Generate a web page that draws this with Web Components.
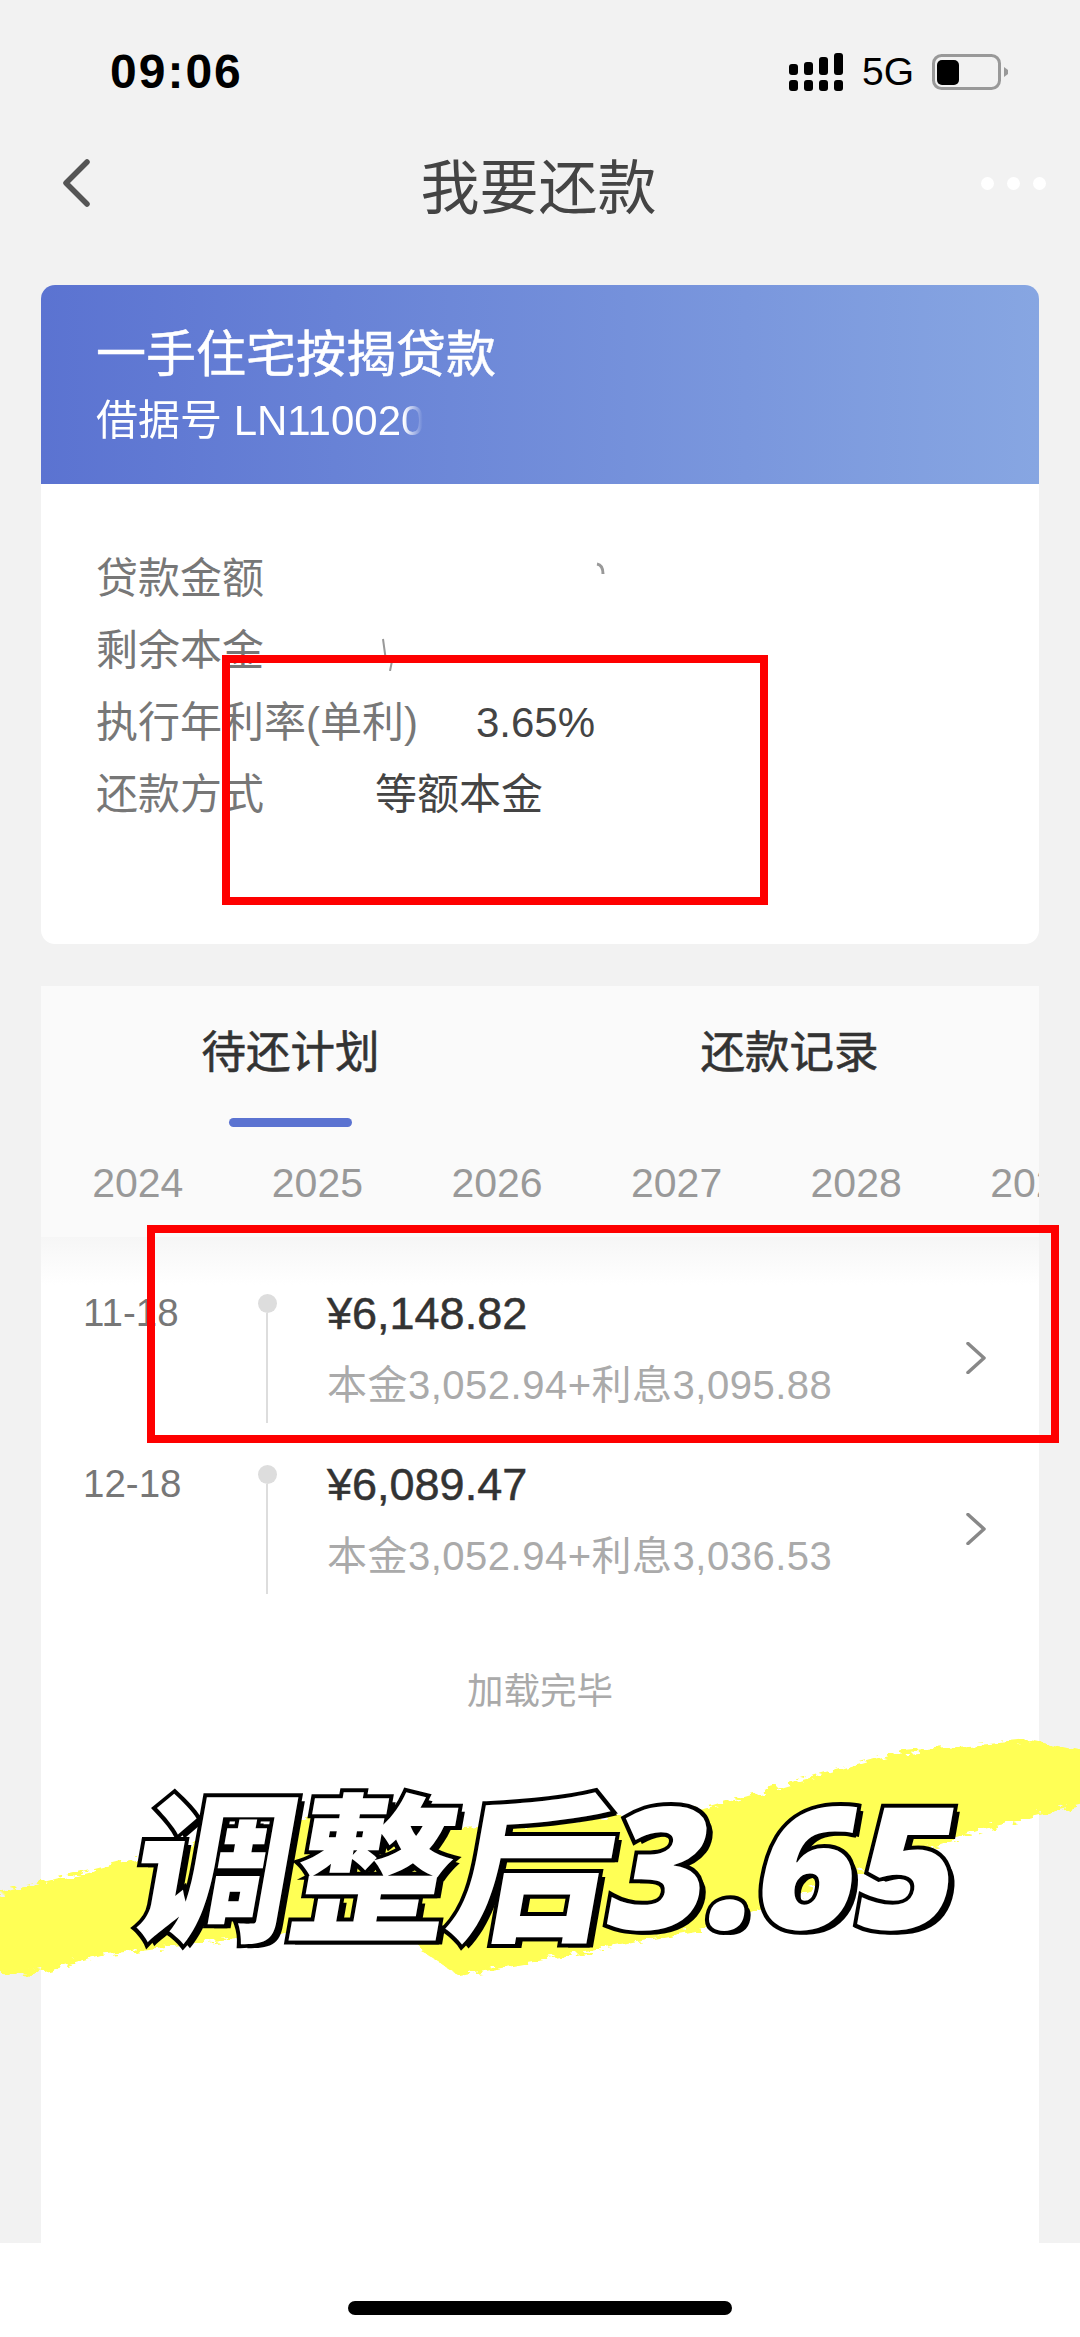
<!doctype html>
<html lang="zh-CN">
<head>
<meta charset="utf-8">
<title>我要还款</title>
<style>
  html, body { margin: 0; padding: 0; background: #f2f2f2; }
  body { font-family: "Liberation Sans", "Noto Sans CJK SC", sans-serif; overflow: hidden; }
</style>
</head>
<body>
<repay-app>
  <status-bar time="09:06"></status-bar>
  <nav-bar>我要还款</nav-bar>
  <loan-card>
    <span slot="title">一手住宅按揭贷款</span>
    <span slot="number">借据号 LN110020</span>
    <info-row>
      <span slot="label">贷款金额</span>
      <svg slot="value" class="smudge" width="20" height="20" viewBox="0 0 20 20" style="margin-left:215px;margin-top:-16px"><path d="M7 3q6 1 6 10" fill="none" stroke="#999" stroke-width="3"/></svg>
    </info-row>
    <info-row>
      <span slot="label">剩余本金</span>
      <svg slot="value" width="24" height="40" viewBox="0 0 24 40" style="margin-left:2px"><path d="M6 8l3 22M15 30l-2 10" fill="none" stroke="#999" stroke-width="2"/></svg>
    </info-row>
    <info-row>
      <span slot="label">执行年利率(单利)</span>
      <span slot="value">3.65%</span>
    </info-row>
    <info-row>
      <span slot="label">还款方式</span>
      <span slot="value">等额本金</span>
    </info-row>
  </loan-card>
  <plan-card>
    <plan-tabs slot="head"></plan-tabs>
    <plan-row>
      <span slot="date">11-18</span>
      <span slot="amount">¥6,148.82</span>
      <span slot="detail">本金3,052.94+利息3,095.88</span>
    </plan-row>
    <plan-row>
      <span slot="date">12-18</span>
      <span slot="amount">¥6,089.47</span>
      <span slot="detail">本金3,052.94+利息3,036.53</span>
    </plan-row>
    <load-end>加载完毕</load-end>
  </plan-card>
  <home-bar></home-bar>
  <promo-banner>调整后3.65</promo-banner>
  <red-box style="left:222px;top:655px;width:546px;height:250px"></red-box>
  <red-box style="left:147px;top:1225px;width:912px;height:218px"></red-box>
</repay-app>

<script>
// @ts-check

/** Small helper so each class only states its markup */
function shadow(host, html) {
  const root = host.attachShadow({ mode: "open" });
  root.innerHTML = html;
  return root;
}

class RepayApp extends HTMLElement {
  constructor() {
    super();
    shadow(this, /*html*/ `
      <style>
        :host {
          display: flex;
          flex-direction: column;
          position: relative;
          width: 1080px;
          height: 2337px;
          overflow: hidden;
          background: #f2f2f2;
        }
      </style>
      <slot></slot>
    `);
  }
}

class StatusBar extends HTMLElement {
  constructor() {
    super();
    const time = this.getAttribute("time") || "";
    shadow(this, /*html*/ `
      <style>
        :host {
          display: flex;
          align-items: center;
          height: 143px;
          padding: 0 72px 0 110px;
          color: #000;
        }
        .time { font-size: 48px; font-weight: 700; letter-spacing: 2px; flex: 1; }
        .icons { display: flex; align-items: center; }
        .net { font-size: 39px; margin: 0 18px 0 19px; }
      </style>
      <span class="time">${time}</span>
      <span class="icons">
        <svg width="54" height="38" viewBox="0 0 54 38" fill="#000">
          <rect x="0" y="27" width="9" height="11" rx="3"/><rect x="15" y="27" width="9" height="11" rx="3"/>
          <rect x="30" y="27" width="9" height="11" rx="3"/><rect x="45" y="27" width="9" height="11" rx="3"/>
          <rect x="0" y="11" width="9" height="11" rx="3"/><rect x="15" y="9" width="9" height="13" rx="3"/>
          <rect x="30" y="4" width="9" height="18" rx="3"/><rect x="45" y="0" width="9" height="22" rx="3"/>
        </svg>
        <span class="net">5G</span>
        <svg width="76" height="36" viewBox="0 0 76 36">
          <rect x="1.5" y="1.5" width="66" height="33" rx="8" fill="none" stroke="#999" stroke-width="3"/>
          <rect x="5" y="6" width="22" height="25" rx="5" fill="#000"/>
          <path d="M72 13l4 3v4l-4 3z" fill="#999"/>
        </svg>
      </span>
    `);
  }
}

class NavBar extends HTMLElement {
  constructor() {
    super();
    shadow(this, /*html*/ `
      <style>
        :host {
          display: flex;
          align-items: center;
          height: 80px;
          margin-bottom: 62px;
          padding: 0 34px 0 62px;
        }
        .title { flex: 1; text-align: center; font-size: 59px; color: #444; margin-left: 6px; }
        .dots { display: flex; gap: 13px; }
        .dots i { width: 13px; height: 13px; border-radius: 50%; background: #fff; }
      </style>
      <svg width="28" height="48" viewBox="0 0 28 48"><path d="M25 3L4 24l21 21" fill="none" stroke="#555" stroke-width="5.5" stroke-linecap="round" stroke-linejoin="round"/></svg>
      <span class="title"><slot></slot></span>
      <span class="dots"><i></i><i></i><i></i></span>
    `);
  }
}

class LoanCard extends HTMLElement {
  constructor() {
    super();
    shadow(this, /*html*/ `
      <style>
        :host {
          display: block;
          margin: 0 41px 42px;
          height: 659px;
          background: #fff;
          border-radius: 14px;
          overflow: hidden;
        }
        .head {
          box-sizing: border-box;
          height: 199px;
          padding: 34px 55px 0;
          color: #fff;
          background: linear-gradient(90deg, #5b73d1, #87a6e2);
        }
        .title { font-size: 50px; line-height: 72px; -webkit-text-stroke: 0.5px #fff; }
        .number {
          width: 327px;
          overflow: hidden;
          white-space: nowrap;
          font-size: 42px;
          line-height: 60px;
          -webkit-mask-image: linear-gradient(90deg, #000 94%, transparent);
          mask-image: linear-gradient(90deg, #000 94%, transparent);
        }
        .body { padding: 59px 55px 0; }
      </style>
      <div class="head">
        <div class="title"><slot name="title"></slot></div>
        <div class="number"><slot name="number"></slot></div>
      </div>
      <div class="body"><slot></slot></div>
    `);
  }
}

class InfoRow extends HTMLElement {
  constructor() {
    super();
    shadow(this, /*html*/ `
      <style>
        :host {
          display: flex;
          align-items: center;
          height: 72px;
          font-size: 42px;
          line-height: 50px;
          white-space: nowrap;
        }
        .label { box-sizing: border-box; min-width: 279px; padding-right: 58px; color: #777; }
        .value { display: flex; align-items: center; color: #444; }
      </style>
      <span class="label"><slot name="label"></slot></span>
      <span class="value"><slot name="value"></slot></span>
    `);
  }
}

class PlanCard extends HTMLElement {
  constructor() {
    super();
    shadow(this, /*html*/ `
      <style>
        :host {
          display: block;
          flex: 1;
          min-height: 0;
          margin: 0 41px;
          background: #fff;
        }
        .fade { height: 48px; margin-bottom: 5px; background: linear-gradient(#f6f6f6, #fff); }
      </style>
      <slot name="head"></slot>
      <div class="fade"></div>
      <slot></slot>
    `);
  }
}

class PlanTabs extends HTMLElement {
  constructor() {
    super();
    const years = ["2024", "2025", "2026", "2027", "2028", "2029"];
    shadow(this, /*html*/ `
      <style>
        :host { display: block; height: 251px; background: #fafafa; overflow: hidden; }
        .tabs { display: grid; grid-template-columns: 1fr 1fr; }
        .tab {
          display: flex;
          flex-direction: column;
          align-items: center;
          padding-top: 37px;
          font-size: 44.5px;
          line-height: 60px;
          color: #333;
          -webkit-text-stroke: 0.6px #333;
        }
        .tab.active::after {
          content: "";
          width: 123px;
          height: 9px;
          margin-top: 35px;
          border-radius: 5px;
          background: #5b73d1;
        }
        .years {
          display: flex;
          margin-top: 30px;
          padding-left: 7px;
          overflow: hidden;
          font-size: 41px;
          line-height: 52px;
          color: #999;
        }
        .years span { flex: 0 0 179.6px; text-align: center; }
      </style>
      <div class="tabs">
        <div class="tab active">待还计划</div>
        <div class="tab">还款记录</div>
      </div>
      <div class="years">${years.map((y) => `<span>${y}</span>`).join("")}</div>
    `);
  }
}

class PlanRow extends HTMLElement {
  constructor() {
    super();
    shadow(this, /*html*/ `
      <style>
        :host {
          display: flex;
          height: 171px;
          padding: 0 53px 0 42px;
          white-space: nowrap;
        }
        .date { width: 174px; padding-top: 3px; font-size: 38.5px; line-height: 40px; color: #777; }
        .rail { display: flex; flex-direction: column; align-items: center; width: 20px; height: 133px; padding-top: 4px; box-sizing: border-box; }
        .rail i { width: 19px; height: 19px; border-radius: 50%; background: #ddd; flex: none; }
        .rail b { width: 2px; flex: 1; background: #ddd; }
        .main { flex: 1; padding-left: 50px; }
        .amount { font-size: 45px; line-height: 50px; color: #333; -webkit-text-stroke: 0.5px #333; margin-top: -1px; }
        .detail { margin-top: 23px; font-size: 40px; line-height: 46px; color: #aaa; letter-spacing: 0.5px; }
        svg { margin-top: 52px; }
      </style>
      <span class="date"><slot name="date"></slot></span>
      <span class="rail"><i></i><b></b></span>
      <div class="main">
        <div class="amount"><slot name="amount"></slot></div>
        <div class="detail"><slot name="detail"></slot></div>
      </div>
      <svg width="20" height="32" viewBox="0 0 20 32"><path d="M2 1.5L18 16 2 30.5" fill="none" stroke="#888" stroke-width="3.5" stroke-linecap="round" stroke-linejoin="round"/></svg>
    `);
  }
}

class LoadEnd extends HTMLElement {
  constructor() {
    super();
    shadow(this, /*html*/ `
      <style>
        :host { display: block; text-align: center; font-size: 36.5px; line-height: 114px; padding-top: 3px; color: #aaa; }
      </style>
      <slot></slot>
    `);
  }
}

class HomeBar extends HTMLElement {
  constructor() {
    super();
    shadow(this, /*html*/ `
      <style>
        :host {
          display: flex;
          justify-content: center;
          flex: none;
          box-sizing: border-box;
          height: 94px;
          padding-top: 58px;
          background: #fff;
        }
        i { width: 384px; height: 14px; border-radius: 7px; background: #000; }
      </style>
      <i></i>
    `);
  }
}

// The brush stroke and the slanted caption lie over the list
class PromoBanner extends HTMLElement {
  constructor() {
    super();
    shadow(this, /*html*/ `
      <style>
        :host { position: absolute; left: 0; top: 1730px; width: 1080px; height: 260px; }
        svg { position: absolute; left: 0; top: 0; }
        .caption {
          position: absolute;
          left: 120px;
          top: 34px;
          display: flex;
          align-items: baseline;
          white-space: nowrap;
          font-family: "Noto Sans CJK SC", sans-serif;
          font-weight: 900;
          font-size: 160px;
          line-height: 190px;
          color: #fff;
          -webkit-text-stroke: 8px #000;
          paint-order: stroke fill;
          text-shadow: 7px 4px 0 #000;
          transform: skewX(-10deg);
          transform-origin: left bottom;
          letter-spacing: -1px;
        }
        .num { font-family: "Open Sans", "Noto Sans CJK SC", sans-serif; font-weight: 800; font-size: 170px; letter-spacing: 0; margin-left: -2px; }
      </style>
      <svg width="1080" height="260" viewBox="0 0 1080 260">
        <defs>
          <filter id="rough" x="-5%" y="-20%" width="110%" height="140%">
            <feTurbulence type="fractalNoise" baseFrequency="0.09 0.22" numOctaves="2" seed="4"/>
            <feDisplacementMap in="SourceGraphic" scale="14"/>
          </filter>
        </defs>
        <path filter="url(#rough)" fill="#ffff55"
          d="M-20 168 L130 130 L320 85 L465 98 L700 80 L895 23 L1030 10 L1100 25 L1100 70
             L980 100 L700 200 L460 246 L420 220 L415 200 L300 200 L100 225 L30 245 L-20 240 Z"/>
      </svg>
      <div class="caption"></div>
    `);
    const caption = this.shadowRoot?.querySelector(".caption");
    const text = this.textContent || "";
    // CJK and digits use different faces
    if (caption) caption.innerHTML = `<span>${text.slice(0, 3)}</span><span class="num">${text.slice(3)}</span>`;
  }
}

class RedBox extends HTMLElement {
  constructor() {
    super();
    shadow(this, /*html*/ `
      <style>
        :host { position: absolute; box-sizing: border-box; border: 8px solid #fe0000; }
      </style>
    `);
  }
}

customElements.define("repay-app", RepayApp);
customElements.define("status-bar", StatusBar);
customElements.define("nav-bar", NavBar);
customElements.define("loan-card", LoanCard);
customElements.define("info-row", InfoRow);
customElements.define("plan-card", PlanCard);
customElements.define("plan-tabs", PlanTabs);
customElements.define("plan-row", PlanRow);
customElements.define("load-end", LoadEnd);
customElements.define("home-bar", HomeBar);
customElements.define("promo-banner", PromoBanner);
customElements.define("red-box", RedBox);
</script>
</body>
</html>
